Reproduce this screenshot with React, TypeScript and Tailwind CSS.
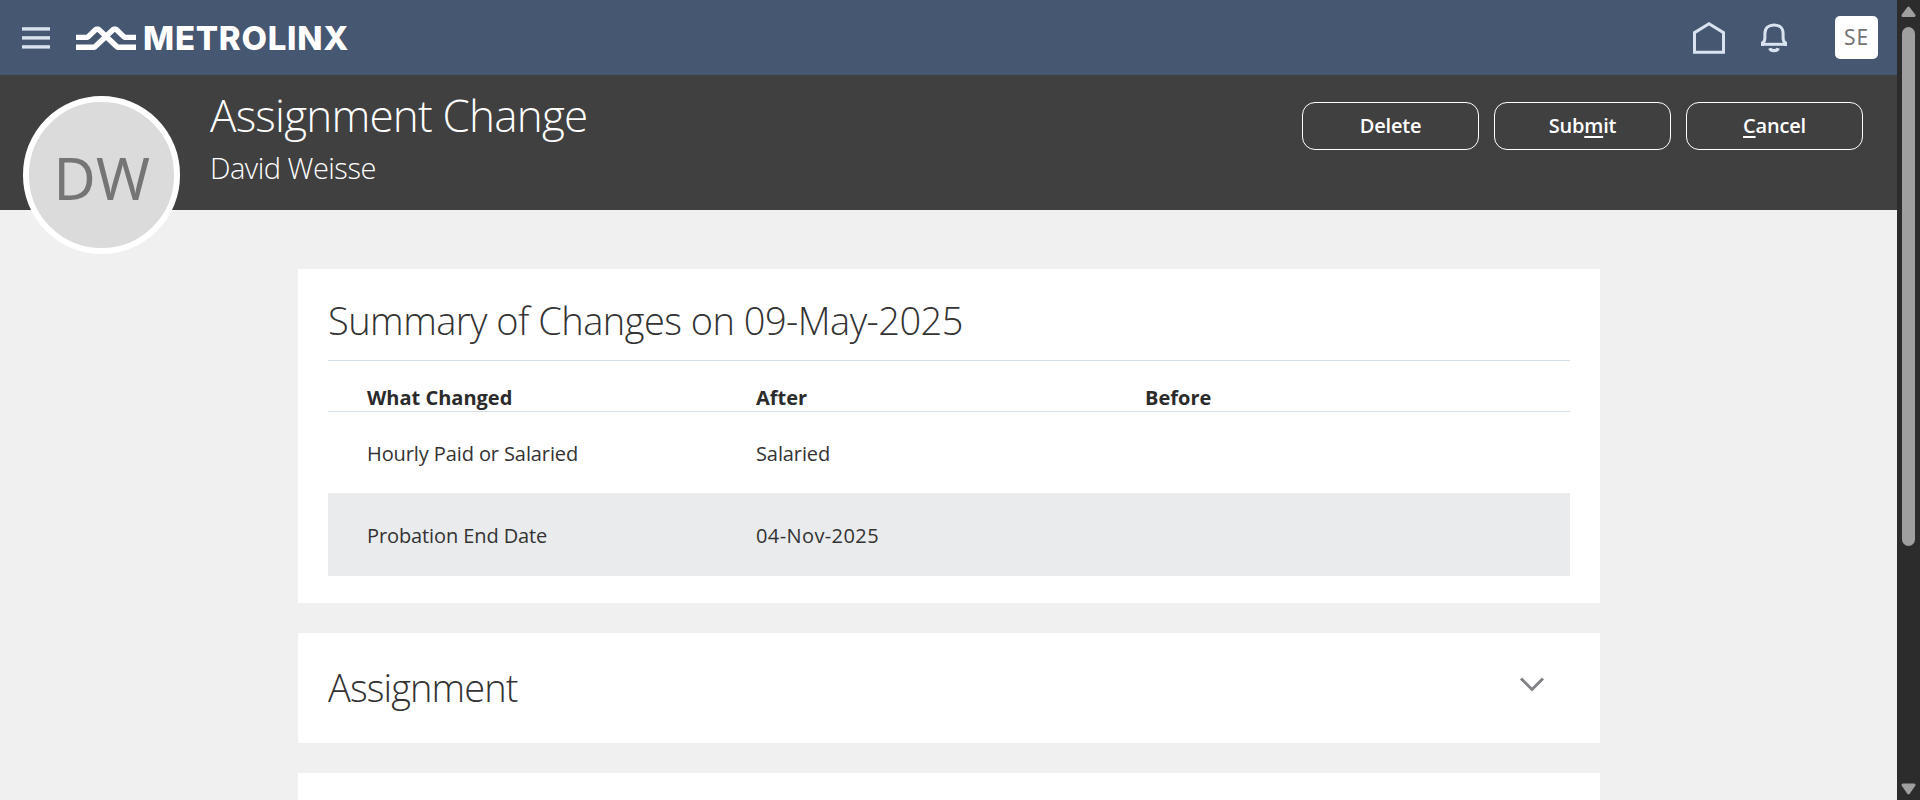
type Change = { what: string; after: string; before: string };

const changes: Change[] = [
  { what: "Hourly Paid or Salaried", after: "Salaried", before: "" },
  { what: "Probation End Date", after: "04-Nov-2025", before: "" },
];

function TopBar() {
  return (
    <header className="flex h-[75px] shrink-0 items-center bg-[#465772] pr-[19px] pl-[22px]">
      <svg className="h-[22px] w-7 shrink-0" viewBox="0 0 28 22" fill="#d9e3f0">
        <rect width="28" height="3.4" y="0.2" />
        <rect width="28" height="3.4" y="9.2" />
        <rect width="28" height="3.4" y="18.2" />
      </svg>
      <svg
        className="ml-[26px] h-[26px] w-[60px] shrink-0"
        viewBox="0 0 60 26"
        fill="none"
        stroke="#fff"
        strokeWidth="5.4"
        strokeLinejoin="bevel"
      >
        <path d="M0 12.4H11.5L20 4.2H22.5L41.5 22.2H60" />
        <path d="M0 22.2H18.5L37.5 4.2H40L48.5 12.4H60" />
      </svg>
      <span className="ml-[7px] font-['Inter',sans-serif] text-[33px] leading-10 font-extrabold tracking-[0.75px] text-white">
        METROLINX
      </span>
      <div className="ml-auto flex items-center">
        <svg className="h-8 w-8" viewBox="0 0 32 32" fill="none" stroke="#d9e3f0" strokeWidth="3">
          <path d="M1.5 30.2V10.6L16 1.8L30.5 10.6V30.2Z" />
        </svg>
        <svg className="ml-9 h-[30px] w-[26px]" viewBox="0 0 26 30" fill="none" stroke="#d9e3f0" strokeWidth="3">
          <path d="M1.5 23V19.9C3.4 19.2 3.9 17.4 3.9 14.5V10.5C3.9 5.2 7.7 1.9 13 1.9S22.1 5.2 22.1 10.5V14.5C22.1 17.4 22.6 19.2 24.5 19.9V23" />
          <path d="M0 21.3H26" />
          <path d="M8.8 25.2C9.9 28.4 16.1 28.4 17.2 25.2" strokeWidth="3.4" />
        </svg>
        <div className="ml-12 flex h-[43px] w-[43px] items-center justify-center rounded-[5px] bg-white font-['Noto_Sans',sans-serif] text-[21px] tracking-[0.8px] text-[#757575]">
          SE
        </div>
      </div>
    </header>
  );
}

function ActionButton({ before = "", accessKey = "", after = "" }: { before?: string; accessKey?: string; after?: string }) {
  return (
    <button className="flex h-12 w-[177px] items-center justify-center rounded-[13px] border border-white text-xl font-semibold tracking-[-0.2px] text-white">
      <span>
        {before}
        {accessKey && (
          <span className="underline decoration-2 underline-offset-[3px] [text-decoration-skip-ink:none]">{accessKey}</span>
        )}
        {after}
      </span>
    </button>
  );
}

function PageHeader() {
  return (
    <section className="flex h-[135px] shrink-0 items-start bg-[#404040] pr-[34px] pl-[23px] text-white">
      <div className="mt-[21px] flex h-[158px] w-[157px] shrink-0 items-center justify-center rounded-full border-6 border-white bg-[#dbdbdb] pt-[5px] pl-px font-['Noto_Sans',sans-serif] text-[58px] leading-none tracking-[0.6px] text-[#757575]">
        DW
      </div>
      <div className="ml-[30px] pt-[18px] font-light">
        <h1 className="text-[44px] leading-[44px] tracking-[-0.8px]">Assignment Change</h1>
        <p className="mt-[13px] text-[29px] leading-9 tracking-[-0.5px]">David Weisse</p>
      </div>
      <div className="mt-[27px] ml-auto flex gap-[15px]">
        <ActionButton before="Delete" />
        <ActionButton before="Sub" accessKey="m" after="it" />
        <ActionButton accessKey="C" after="ancel" />
      </div>
    </section>
  );
}

function SummaryCard() {
  return (
    <section className="h-[334px] shrink-0 bg-white px-[30px] pt-[25px]">
      <h2 className="text-[38px] leading-[52px] font-light tracking-[-0.53px]">Summary of Changes on 09-May-2025</h2>
      <div className="mt-[14px] border-t border-[#d6dfe6] text-xl tracking-[-0.1px]">
        <div className="grid h-[51px] grid-cols-[389px_389px_1fr] items-end border-b border-[#d6dfe6] pl-[39px] leading-[27px] font-bold tracking-normal text-[#2b2b2b]">
          <div>What Changed</div>
          <div>After</div>
          <div>Before</div>
        </div>
        {changes.map((c) => (
          <div
            key={c.what}
            className="grid grid-cols-[389px_389px_1fr] items-center pt-[3px] pl-[39px] even:h-[81px] odd:h-[83px] odd:bg-[#eaebed]"
          >
            <div>{c.what}</div>
            <div className={c.after.includes("-") ? "tracking-[0.4px]" : ""}>{c.after}</div>
            <div>{c.before}</div>
          </div>
        ))}
      </div>
    </section>
  );
}

function AssignmentCard() {
  return (
    <section className="flex h-[110px] shrink-0 items-start justify-between bg-white pr-[55px] pl-[30px]">
      <h2 className="mt-7 text-[38px] leading-[52px] font-light tracking-[-0.9px]">Assignment</h2>
      <svg className="mt-[43px] h-4 w-[26px]" viewBox="0 0 26 16" fill="none" stroke="#808285" strokeWidth="3">
        <path d="M2 2.5L13 13.5L24 2.5" />
      </svg>
    </section>
  );
}

function ScrollBar() {
  return (
    <div className="flex w-[23px] shrink-0 flex-col items-center bg-[#2c2c2c] pt-1.5 pb-[5px]">
      <svg className="h-[11px] w-[15px] shrink-0" viewBox="0 0 15 11" fill="#9f9f9f" stroke="#9f9f9f" strokeWidth="3" strokeLinejoin="round">
        <path d="M7.5 2.2L13 9.5H2Z" />
      </svg>
      <div className="mt-2.5 h-[519px] w-[13px] rounded-full bg-[#9f9f9f]" />
      <svg className="mt-auto h-3 w-[15px] shrink-0" viewBox="0 0 15 12" fill="#9f9f9f" stroke="#9f9f9f" strokeWidth="3" strokeLinejoin="round">
        <path d="M7.5 9.8L13 2H2Z" />
      </svg>
    </div>
  );
}

export default function App() {
  return (
    <div className="flex h-[800px] w-[1920px] overflow-hidden bg-[#f0f0f0] font-['Open_Sans','Noto_Sans',sans-serif] text-[#333]">
      <div className="flex min-w-0 flex-1 flex-col">
        <TopBar />
        <PageHeader />
        <main className="mt-[59px] ml-[298px] flex w-[1302px] flex-col gap-[30px]">
          <SummaryCard />
          <AssignmentCard />
          <section className="h-[110px] shrink-0 bg-white" />
        </main>
      </div>
      <ScrollBar />
    </div>
  );
}
